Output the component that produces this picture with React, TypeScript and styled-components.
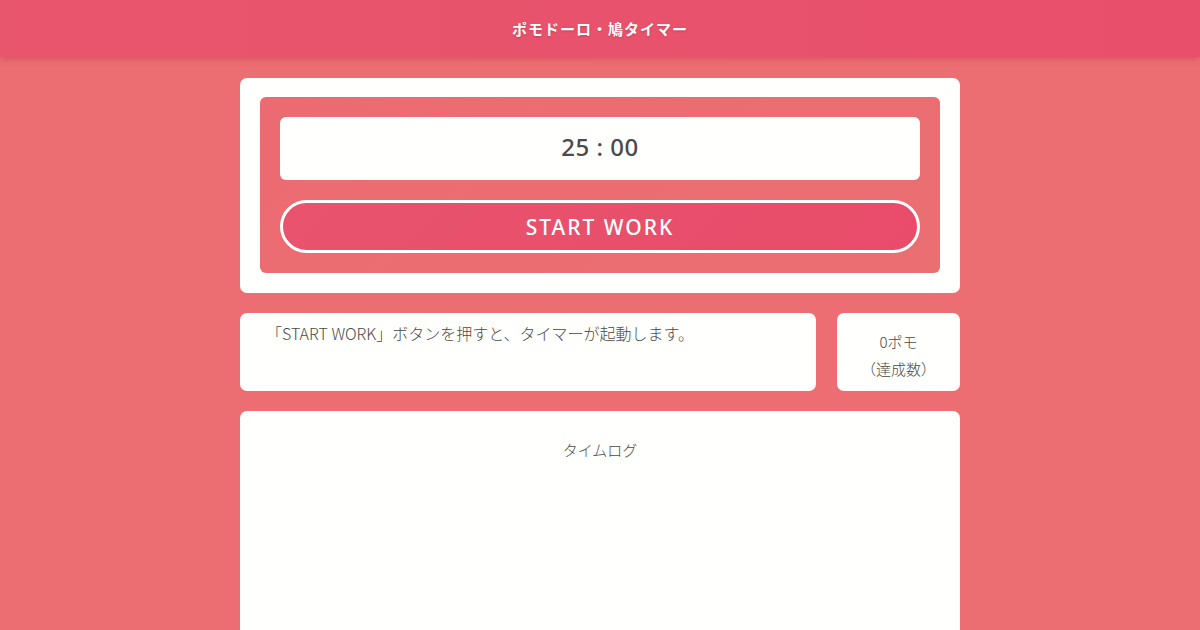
import styled, { createGlobalStyle } from 'styled-components';

const GlobalStyle = createGlobalStyle`
    * { box-sizing: border-box; }
    html, body {
        margin: 0;
        padding: 0;
        height: 100%;
    }
    body {
        background: #ec6e72;
        font-family: 'Noto Sans', 'Noto Sans CJK JP', sans-serif;
        color: #4a4a4a;
        overflow: hidden;
    }
`;

const Header = styled.header`
    height: 57px;
    display: flex;
    justify-content: center;
    align-items: center;
    background: linear-gradient(90deg, #e8566d, #e84f6b);
    box-shadow: 0 2px 6px rgba(180, 40, 60, 0.35);
    position: relative;
    z-index: 1;
`;

const Title = styled.h1`
    margin: 0;
    padding-bottom: 1px;
    font-family: 'Noto Sans CJK JP', sans-serif;
    font-size: 15px;
    font-weight: 700;
    color: #fff;
    letter-spacing: 1px;
    text-shadow: 0 1px 2px rgba(120, 20, 40, 0.3);
`;

const Main = styled.main`
    width: 720px;
    margin: 21px auto 0;
    display: flex;
    flex-direction: column;
    gap: 20px;
`;

const Card = styled.section<{ $pad?: string; $height?: string }>`
    background: #fffffd;
    border-radius: 7px;
    padding: ${(p) => p.$pad ?? '0'};
    height: ${(p) => p.$height ?? 'auto'};
`;

const TimerPanel = styled.div`
    background: linear-gradient(135deg, #ec6b72, #ea6f71);
    border-radius: 6px;
    padding: 20px;
    display: flex;
    flex-direction: column;
    gap: 20px;
`;

const TimerDisplay = styled.div`
    height: 63px;
    padding-bottom: 4px;
    background: #fffffd;
    border-radius: 6px;
    display: flex;
    justify-content: center;
    align-items: center;
    font-size: 24px;
    font-weight: 500;
    color: #4a4a4a;
    letter-spacing: 0.5px;
`;

const StartButton = styled.button`
    height: 53px;
    padding-top: 2px;
    border: 3px solid #fffffd;
    border-radius: 999px;
    background: linear-gradient(135deg, #e8536d, #e84c6a);
    color: #fff;
    font-family: 'Noto Sans', sans-serif;
    font-size: 21px;
    font-weight: 500;
    letter-spacing: 2px;
    cursor: pointer;
`;

const Row = styled.div`
    display: flex;
    gap: 21px;
    height: 78px;
`;

const Message = styled(Card)`
    flex: 1;
    padding: 9px 26px;
    font-family: 'Noto Sans CJK JP', sans-serif;
    font-size: 16px;
    font-weight: 300;
    line-height: 22px;
    color: #4a4a4a;
`;

const Count = styled(Card)`
    width: 123px;
    padding-top: 6px;
    display: flex;
    flex-direction: column;
    justify-content: center;
    align-items: center;
    gap: 5px;
    font-family: 'Noto Sans CJK JP', sans-serif;
    font-size: 15px;
    font-weight: 300;
    line-height: 22px;
    color: #4a4a4a;
`;

const LogTitle = styled.h2`
    margin: 0;
    text-align: center;
    font-family: 'Noto Sans CJK JP', sans-serif;
    font-size: 15px;
    font-weight: 300;
    color: #4a4a4a;
`;

export default function App() {
    return (
        <>
            <GlobalStyle />
            <Header>
                <Title>ポモドーロ・鳩タイマー</Title>
            </Header>
            <Main>
                <Card $pad="19px 20px 20px">
                    <TimerPanel>
                        <TimerDisplay>25 : 00</TimerDisplay>
                        <StartButton>START WORK</StartButton>
                    </TimerPanel>
                </Card>
                <Row>
                    <Message>「START WORK」ボタンを押すと、タイマーが起動します。</Message>
                    <Count>
                        <span>0ポモ</span>
                        <span>（達成数）</span>
                    </Count>
                </Row>
                <Card $pad="28px 0 0" $height="260px">
                    <LogTitle>タイムログ</LogTitle>
                </Card>
            </Main>
        </>
    );
}
